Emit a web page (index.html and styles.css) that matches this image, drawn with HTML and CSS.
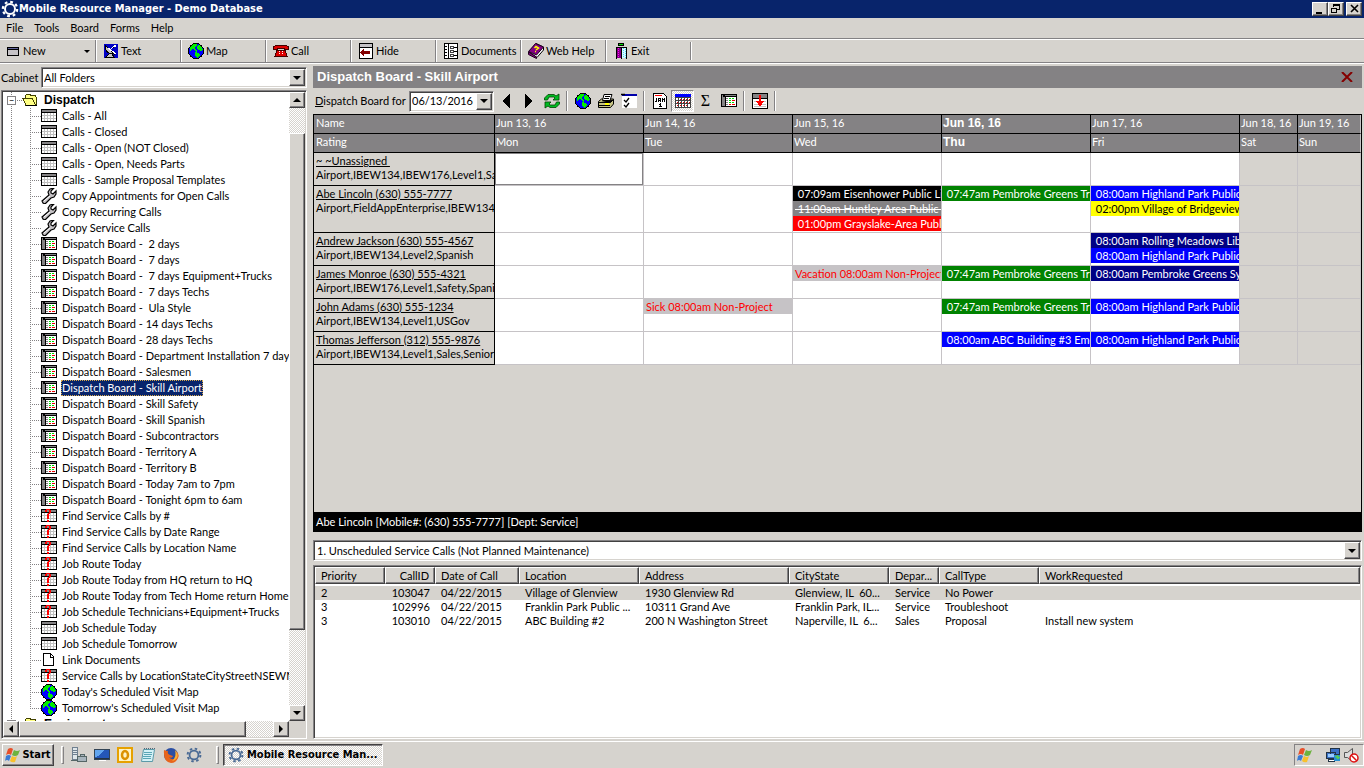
FILE: index.html
```html
<!DOCTYPE html>
<html lang="en">
<head>
<meta charset="utf-8">
<title>Mobile Resource Manager - Demo Database</title>
<link rel="stylesheet" href="styles.css">
</head>
<body>
<svg class="defs" aria-hidden="true">
  <symbol id="i-cal" viewBox="0 0 16 16"><path fill="#000" d="M0 1h16v13H0z"/><path fill="#848284" d="M1 2h14v2H1z"/><path fill="#c0c0c0" d="M1 5h14v8H1z"/><path fill="#fff" d="M1 5h2v2H1zM4 5h2v2H4zM7 5h2v2H7zM10 5h2v2h-2zM13 5h2v2h-2zM1 8h2v2H1zM4 8h2v2H4zM7 8h2v2H7zM10 8h2v2h-2zM13 8h2v2h-2zM1 11h2v2H1zM4 11h2v2H4zM7 11h2v2H7zM10 11h2v2h-2zM13 11h2v2h-2z"/></symbol>
  <symbol id="i-find" viewBox="0 0 16 16"><path fill="#000" d="M0 1h16v13H0z"/><path fill="#848284" d="M1 2h14v2H1z"/><path fill="#c0c0c0" d="M1 5h14v8H1z"/><path fill="#fff" d="M1 5h2v2H1zM4 5h2v2H4zM7 5h2v2H7zM10 5h2v2h-2zM13 5h2v2h-2zM1 8h2v2H1zM4 8h2v2H4zM7 8h2v2H7zM10 8h2v2h-2zM13 8h2v2h-2zM1 11h2v2H1zM4 11h2v2H4zM7 11h2v2H7zM10 11h2v2h-2zM13 11h2v2h-2z"/><path fill="#f00" d="M5 1h4v1H5zM4 2h2v2H4zM8 2h2v3H8zM7 5h2v1H7zM6 6h2v5H6zM6 12h2v2H6z"/></symbol>
  <symbol id="i-board" viewBox="0 0 16 16"><path fill="#000" d="M0 1h16v13H0z"/><path fill="#848284" d="M1 2h1v11H1zM2 4h2v9H2zM4 2h11v1H4z"/><path fill="#fff" d="M5 4h10v9H5z"/><path fill="#848284" d="M5 5h2v1H5zM5 7h2v1H5zM5 9h2v1H5zM5 11h2v1H5z"/><path fill="#0d0" d="M8 5h2v1H8zM11 5h2v1h-2zM8 7h2v1H8zM8 9h2v1H8zM11 9h2v1h-2z"/><path fill="#e00" d="M11 7h3v1h-3zM8 11h2v1H8zM11 11h3v1h-3z"/></symbol>
  <symbol id="i-wrench" viewBox="0 0 16 16"><path fill="#c6c3c6" stroke="#000" stroke-width="1.200" d="M1 13 8 7 7 4l2-3 4-1-3 3v2l2 1 3-3v3l-2 3-3 1-6 6-2-1z"/><path stroke="#fff" d="m3 13 6-5"/></symbol>
  <symbol id="i-doc" viewBox="0 0 16 16"><path fill="#fff" stroke="#000" d="M2.500 1.500h7l3 3v9h-10z"/><path fill="none" stroke="#000" d="M9.500 2v3h3"/></symbol>
  <symbol id="i-globe" viewBox="0 0 16 16"><circle cx="8" cy="8" r="7.500" fill="#00f" stroke="#000"/><path fill="#0e0" d="M2 4 5 1h4v2L7 4v2l2 1v2L7 8 5 6 2 8zM10 2l3 1 2 4-2 1-3-1-1-2zM7 9l4 1 1 2-3 3-2-2z"/></symbol>
  <symbol id="i-folder" viewBox="0 0 16 14"><path fill="#ffff84" stroke="#424100" d="M1 5.500h9l4 7H4zM3 5V2.500l2-1h3l1 1h4l1.500 2v8"/><path stroke="#000" d="M4 12.500h11"/></symbol>
  <symbol id="i-gear" viewBox="0 0 18 18"><circle cx="9" cy="9" r="5" fill="none" stroke="currentColor" stroke-width="2"/><circle cx="9" cy="9" r="7.200" fill="none" stroke="currentColor" stroke-width="2.200" stroke-dasharray="2.800 2.850"/></symbol>
  <symbol id="i-window" viewBox="0 0 16 16"><path fill="#000" d="M3 4h12v9H3z"/><path fill="#63659c" d="M4 5h10v1H4z"/><path fill="#c6c3c6" d="M4 7h10v5H4z"/></symbol>
  <symbol id="i-dish" viewBox="0 0 16 16"><path fill="#0000c6" d="M1 1h14v14H1z"/><path fill="#c6c3c6" stroke="#000" d="M2 2c0 6 3 9 9 9L6 6zM6 11l-3 3h8l-2-3"/><path stroke="#fff" stroke-width="1.300" d="m5 5 8 6M7 7l4-4h2"/><path fill="#fff" d="M11 2h2v2h-2z"/></symbol>
  <symbol id="i-phone" viewBox="0 0 16 16"><path fill="#d00" stroke="#400" d="M.5 6.500V4L3 2.500h10L15.500 4v2.500h-4V5h-7v1.500zM4 7h8l2 6.500H2z"/><path fill="#fff" d="M6 8h1v1H6zM9 8h1v1H9zM6 10h1v1H6zM9 10h1v1H9z"/></symbol>
  <symbol id="i-hide" viewBox="0 0 16 16"><path fill="#fff" stroke="#000" d="M1.500.5h13v15h-13z"/><path fill="#c6c3c6" d="M2 1h12v3H2z"/><path stroke="#000" d="M2 4.500h12"/><path fill="#840000" d="m2 9 4-4v3h6v3H6v3z"/></symbol>
  <symbol id="i-docs" viewBox="0 0 16 16"><path fill="#fff" stroke="#000" d="M1.500.5h13v15h-13zM5.500 1v14M1 3.500h3M1 6.500h3M1 9.500h3M1 12.500h3"/><path fill="#fff" stroke="#424142" d="M7.500 3.500h3v2h-3zM7.500 7.500h3v2h-3zM7.500 11.500h3v2h-3z"/><path stroke="#000" d="M11 4.500h3M11 8.500h3M11 12.500h3"/></symbol>
  <symbol id="i-book" viewBox="0 0 16 16"><path fill="#fff" stroke="#000" d="m1 9 8 5.500L15.500 7V4L8 .5z"/><path fill="#840084" stroke="#210021" d="m.5 8.500 7-8 8 3.500-7 8z"/><path fill="#840084" stroke="#210021" d="M.5 9v2.500l8 4V14z"/><path fill="none" stroke="#ff0" stroke-width="1.500" d="M6.500 5 8 3.500 10.500 5 8 7M7 8.500h1"/></symbol>
  <symbol id="i-exit" viewBox="0 0 16 16"><path fill="#000" d="M5 0h6v3H5zM3 4h11v12h-1V5H4v11H3z"/><path fill="#0d0" d="M6 1h4v1H6z"/><path fill="#840084" d="M4 5h4v10H4z"/><path fill="#000" d="M8 5h1v11H8z"/><path fill="#d6ffff" d="M9 5h4v10H9z"/><path stroke="#f0f" stroke-dasharray="1 1" d="M5.500 5v10"/><path stroke="#5cf" stroke-dasharray="1 1" d="M10.500 5v10M12.500 6v9"/></symbol>
  <symbol id="i-refresh" viewBox="0 0 16 16"><path fill="#0b2" stroke="#040" stroke-width=".8" d="M.5 7V5L4 1.500h6L12 3l3-2v6H9l2-2-1-1H5L3.500 7zM15.500 9v2L12 14.500H6L4 13l-3 2V9h6l-2 2 1 1h5l1.500-3z"/></symbol>
  <symbol id="i-print" viewBox="0 0 16 16"><path fill="#c6c384" stroke="#000" d="M.5 8.500 3.500 6h12v5l-3 3.500H.5z"/><path fill="#fff" stroke="#000" d="M4.500 7.500 6 1.500h8l-2 6z"/><path stroke="#000" d="M.5 9.500h12l3-3M1 12.500h11M7 3.500h5M6 5.500h5"/><path fill="#ff0" d="M7 10h4v2H7z"/></symbol>
  <symbol id="i-check" viewBox="0 0 16 16"><path fill="#fff" d="M1 1h15v14H1z"/><path fill="#00a" d="M1 1h15v2H1z"/><path fill="none" stroke="#000" stroke-width="1.300" d="M0 1.500h4M3 7l2 2 3-4M3 12l2 2 3-4"/></symbol>
  <symbol id="i-day" viewBox="0 0 16 16"><path fill="#fff" stroke="#000" d="M1.500.5h10l3 3v12h-13z"/><path stroke="#f00" d="M3 2.500h7"/><path fill="#000" d="M4 5h1v4H4zM3 8h1v1H3zM6 5h3v1H6zM6 6h1v3H6zM8 6h1v3H8zM6 7h3v1H6zM10 5h1v4h-1zM11 6h1v1h-1zM12 5h1v4h-1zM7 11h1v1H7zM8 10h1v4H8zM7 13h3v1H7z"/></symbol>
  <symbol id="i-month" viewBox="0 0 16 16"><path fill="#424142" d="M0 1h16v14H0z"/><path fill="#00f" d="M0 1h16v3H0z"/><path fill="#fff" d="M1 5h2v2H1zM4 5h2v2H4zM7 5h2v2H7zM10 5h2v2h-2zM13 5h2v2h-2zM1 8h2v2H1zM4 8h2v2H4zM7 8h2v2H7zM10 8h2v2h-2zM13 8h2v2h-2zM1 11h2v3H1zM4 11h2v3H4zM7 11h2v3H7zM10 11h2v3h-2zM13 11h2v3h-2z"/><path fill="#e00" d="M5 6h1v1H5zM8 6h1v1H8zM11 6h1v1h-1zM14 6h1v1h-1zM2 9h1v1H2zM5 9h1v1H5zM8 9h1v1H8zM11 9h1v1h-1zM14 9h1v1h-1zM2 12h1v1H2zM5 12h1v1H5zM8 12h1v1H8zM11 12h1v1h-1z"/></symbol>
  <symbol id="i-down" viewBox="0 0 16 16"><path fill="#fff" stroke="#000" d="M.5.500h15v15H.5z"/><path fill="#848284" d="M1 1h14v4H1z"/><path stroke="#000" d="M1 5.500h14"/><path stroke="#c6c3c6" d="M2 8.500h12M2 11.500h12M2 13.500h12"/><path fill="#f00" d="M7 2h2v6h3l-4 6-4-6h3z"/></symbol>
  <symbol id="i-flag" viewBox="0 0 16 16"><path fill="#e8502a" d="M3 2q3-2 5 0L6 8Q4 6 1 8z"/><path fill="#6cb33f" d="M9 3q3 2 6 0l-2 5q-3 2-6 0z"/><path fill="#3a7bd5" d="M1 9q3-2 5 0l-2 5q-2-2-4 0z"/><path fill="#f8c12c" d="M7 9q3 2 5 0l-2 6q-3 1-5-1z"/></symbol>
  <symbol id="i-server" viewBox="0 0 16 16"><path fill="#dfe6ea" stroke="#708090" d="M1.500.5h5v12h-5z"/><path stroke="#708090" d="M2 3.500h4M2 5.500h4M2 7.500h4"/><path fill="#a7b4bd" stroke="#566" d="M6.500 9.500h9v5h-9zM9 9V7.500h4V9M0 13.500h6"/></symbol>
  <symbol id="i-desk" viewBox="0 0 16 16"><path fill="#2457b8" stroke="#345" d="M.5 2.500h15v10H.5z"/><path fill="#62a5ee" d="m1 3h9L4 9 1 10z"/><path fill="#fff" d="M5 13h7v1H5z"/><path fill="#234" d="M1 11h14v1H1z"/></symbol>
  <symbol id="i-outlook" viewBox="0 0 16 16"><path fill="#fff3c4" stroke="#e6a100" stroke-width="2" d="M1 1h14v14H1z"/><ellipse cx="8" cy="8" rx="3" ry="4" fill="none" stroke="#dc9200" stroke-width="2.500"/></symbol>
  <symbol id="i-note" viewBox="0 0 16 16"><path fill="#d3f1f6" stroke="#5b9aa8" d="M3.500 2.500h11l-2 12h-11z"/><path stroke="#5aa6b5" d="M4 5.500h8M4 7.500h8M3 9.500h8M3 11.500h8"/><path stroke="#567" stroke-dasharray="1 1" d="M4 1.500h11"/></symbol>
  <symbol id="i-fox" viewBox="0 0 16 16"><circle cx="8" cy="8" r="7" fill="#2c4fa3"/><path fill="#e8641b" d="M1 3q2 1 4 1-1 3 2 4l3 1q-1 3-4 1 3 4 7 1 2-3 0-7 4 3 2 7-2 5-7 5Q0 15 1 3z"/><path fill="#fbb034" d="M12 3q4 4 2 8-2 3-5 3 5-4 3-11z"/></symbol>
  <symbol id="i-net" viewBox="0 0 16 16"><path fill="#3a6fc5" stroke="#234" d="M5.500 1.500h9v6h-9zM1.500 5.500h9v6h-9z"/><path fill="#9cf" d="M3 7h6v3H3z"/><path fill="#fff" stroke="#234" d="M3.500 12.500h6v2h-6z"/><circle cx="12" cy="11" r="3.500" fill="#2b8fd0"/><path fill="#5c5" d="m10 9 3-1 2 3-3 1z"/></symbol>
  <symbol id="i-mute" viewBox="0 0 16 16"><path fill="#ddd" stroke="#555" d="M1.500 5.500h3l5-4v13l-5-4h-3z"/><circle cx="11" cy="11" r="4" fill="#fff" stroke="#d11" stroke-width="1.500"/><path stroke="#d11" stroke-width="1.500" d="m8 8 6 6"/></symbol>
</svg>

<header class="titlebar">
  <svg class="title-icon smooth"><use href="#i-gear"/></svg>
  <h1>Mobile Resource Manager - Demo Database</h1>
  <div class="win-buttons">
    <button class="bevel" aria-label="Minimize"><svg viewBox="0 0 12 10"><path d="M2 8h6v2H2z"/></svg></button>
    <button class="bevel" aria-label="Restore"><svg viewBox="0 0 12 10"><path fill="none" stroke="#000" d="M3.500 3V.5h6v5H7M1.500 4.500h5v4h-5z"/><path d="M3 0h7v2H3zM1 4h6v1H1z"/></svg></button>
    <button class="bevel close" aria-label="Close"><svg class="smooth" viewBox="0 0 12 10"><path stroke="#000" stroke-width="1.600" d="m3 1 7 7M10 1 3 8"/></svg></button>
  </div>
</header>

<nav class="menubar">
  <button>File</button><button>Tools</button><button>Board</button><button>Forms</button><button>Help</button>
</nav>

<div class="toolbar">
  <button class="tool new"><svg><use href="#i-window"/></svg>New<i class="caret"></i></button>
  <button class="tool"><svg><use href="#i-dish"/></svg>Text</button>
  <button class="tool"><svg><use href="#i-globe"/></svg>Map</button>
  <button class="tool"><svg><use href="#i-phone"/></svg>Call</button>
  <button class="tool"><svg><use href="#i-hide"/></svg>Hide</button>
  <button class="tool"><svg><use href="#i-docs"/></svg>Documents</button>
  <button class="tool"><svg class="smooth"><use href="#i-book"/></svg>Web Help</button>
  <button class="tool last"><svg><use href="#i-exit"/></svg>Exit</button>
</div>

<main class="main">
  <aside class="side">
    <div class="cabinet">
      <label for="cabinet">Cabinet</label>
      <div class="combo sunken"><select id="cabinet"><option>All Folders</option></select><span class="drop bevel"><i class="caret"></i></span></div>
    </div>
    <div class="tree sunken">
      <ul class="items">
        <li class="root"><span class="box">−</span><svg><use href="#i-folder"/></svg><b>Dispatch</b></li>
        <li><svg><use href="#i-cal"/></svg><span>Calls - All</span></li>
        <li><svg><use href="#i-cal"/></svg><span>Calls - Closed</span></li>
        <li><svg><use href="#i-cal"/></svg><span>Calls - Open (NOT Closed)</span></li>
        <li><svg><use href="#i-cal"/></svg><span>Calls - Open, Needs Parts</span></li>
        <li><svg><use href="#i-cal"/></svg><span>Calls - Sample Proposal Templates</span></li>
        <li><svg class="smooth"><use href="#i-wrench"/></svg><span>Copy Appointments for Open Calls</span></li>
        <li><svg class="smooth"><use href="#i-wrench"/></svg><span>Copy Recurring Calls</span></li>
        <li><svg class="smooth"><use href="#i-wrench"/></svg><span>Copy Service Calls</span></li>
        <li><svg><use href="#i-board"/></svg><span>Dispatch Board -  2 days</span></li>
        <li><svg><use href="#i-board"/></svg><span>Dispatch Board -  7 days</span></li>
        <li><svg><use href="#i-board"/></svg><span>Dispatch Board -  7 days Equipment+Trucks</span></li>
        <li><svg><use href="#i-board"/></svg><span>Dispatch Board -  7 days Techs</span></li>
        <li><svg><use href="#i-board"/></svg><span>Dispatch Board -  Ula Style</span></li>
        <li><svg><use href="#i-board"/></svg><span>Dispatch Board - 14 days Techs</span></li>
        <li><svg><use href="#i-board"/></svg><span>Dispatch Board - 28 days Techs</span></li>
        <li><svg><use href="#i-board"/></svg><span>Dispatch Board - Department Installation 7 days</span></li>
        <li><svg><use href="#i-board"/></svg><span>Dispatch Board - Salesmen</span></li>
        <li><svg><use href="#i-board"/></svg><span class="selected">Dispatch Board - Skill Airport</span></li>
        <li><svg><use href="#i-board"/></svg><span>Dispatch Board - Skill Safety</span></li>
        <li><svg><use href="#i-board"/></svg><span>Dispatch Board - Skill Spanish</span></li>
        <li><svg><use href="#i-board"/></svg><span>Dispatch Board - Subcontractors</span></li>
        <li><svg><use href="#i-board"/></svg><span>Dispatch Board - Territory A</span></li>
        <li><svg><use href="#i-board"/></svg><span>Dispatch Board - Territory B</span></li>
        <li><svg><use href="#i-board"/></svg><span>Dispatch Board - Today 7am to 7pm</span></li>
        <li><svg><use href="#i-board"/></svg><span>Dispatch Board - Tonight 6pm to 6am</span></li>
        <li><svg><use href="#i-find"/></svg><span>Find Service Calls by #</span></li>
        <li><svg><use href="#i-find"/></svg><span>Find Service Calls by Date Range</span></li>
        <li><svg><use href="#i-find"/></svg><span>Find Service Calls by Location Name</span></li>
        <li><svg><use href="#i-find"/></svg><span>Job Route Today</span></li>
        <li><svg><use href="#i-find"/></svg><span>Job Route Today from HQ return to HQ</span></li>
        <li><svg><use href="#i-find"/></svg><span>Job Route Today from Tech Home return Home</span></li>
        <li><svg><use href="#i-find"/></svg><span>Job Schedule Technicians+Equipment+Trucks</span></li>
        <li><svg><use href="#i-cal"/></svg><span>Job Schedule Today</span></li>
        <li><svg><use href="#i-cal"/></svg><span>Job Schedule Tomorrow</span></li>
        <li><svg><use href="#i-doc"/></svg><span>Link Documents</span></li>
        <li><svg><use href="#i-find"/></svg><span>Service Calls by LocationStateCityStreetNSEWM</span></li>
        <li><svg><use href="#i-globe"/></svg><span>Today's Scheduled Visit Map</span></li>
        <li class="end"><svg><use href="#i-globe"/></svg><span>Tomorrow's Scheduled Visit Map</span></li>
        <li class="root"><span class="box">+</span><svg><use href="#i-folder"/></svg><b>Equipment</b></li>
      </ul>
      <div class="vscroll">
        <button class="bevel" aria-label="Scroll up"><i class="caret up"></i></button>
        <div class="vthumb bevel"></div>
        <button class="bevel" aria-label="Scroll down"><i class="caret"></i></button>
      </div>
      <div class="hscroll">
        <button class="bevel" aria-label="Scroll left"><i class="caret left"></i></button>
        <div class="hthumb bevel"></div>
        <button class="bevel" aria-label="Scroll right"><i class="caret right"></i></button>
      </div>
    </div>
  </aside>

  <section class="panel">
    <div class="panel-head">
      <h2>Dispatch Board - Skill Airport</h2>
      <button aria-label="Close board"><svg class="smooth" viewBox="0 0 12 10"><path stroke="#840000" stroke-width="2" d="m1 0 10 10M11 0 1 10"/></svg></button>
    </div>
    <div class="board-tools">
      <label for="date"><u>D</u>ispatch Board for</label>
      <div class="combo date sunken"><input id="date" value="06/13/2016"><button class="drop bevel" aria-label="Pick date"><i class="caret"></i></button></div>
      <button class="ib" aria-label="Previous"><svg viewBox="0 0 16 16"><path d="M12 1v14L4 8z"/></svg></button>
      <button class="ib" aria-label="Next"><svg viewBox="0 0 16 16"><path d="M4 1v14l8-7z"/></svg></button>
      <button class="ib" aria-label="Refresh"><svg class="smooth"><use href="#i-refresh"/></svg></button>
      <i class="sep"></i>
      <button class="ib" aria-label="Map"><svg><use href="#i-globe"/></svg></button>
      <button class="ib" aria-label="Print"><svg class="smooth"><use href="#i-print"/></svg></button>
      <button class="ib" aria-label="Options"><svg class="smooth"><use href="#i-check"/></svg></button>
      <i class="sep"></i>
      <button class="ib" aria-label="Day"><svg><use href="#i-day"/></svg></button>
      <button class="ib pressed" aria-label="Week"><svg><use href="#i-month"/></svg></button>
      <button class="ib sigma">Σ</button>
      <button class="ib" aria-label="Grid"><svg><use href="#i-board"/></svg></button>
      <i class="sep"></i>
      <button class="ib" aria-label="Show calls"><svg><use href="#i-down"/></svg></button>
      <i class="sep"></i>
    </div>

    <div class="board">
      <table class="grid">
        <colgroup><col class="c-name"><col><col><col><col><col><col class="c-sat"><col class="c-sun"></colgroup>
        <thead>
          <tr><th>Name</th><th>Jun 13, 16</th><th>Jun 14, 16</th><th>Jun 15, 16</th><th class="today">Jun 16, 16</th><th>Jun 17, 16</th><th>Jun 18, 16</th><th>Jun 19, 16</th></tr>
          <tr><th>Rating</th><th>Mon</th><th>Tue</th><th>Wed</th><th class="today">Thu</th><th>Fri</th><th>Sat</th><th>Sun</th></tr>
        </thead>
        <tbody>
          <tr><th><a href="#">~ ~Unassigned&nbsp;</a><p>Airport,IBEW134,IBEW176,Level1,Sa</p></th><td class="focus"></td><td></td><td></td><td></td><td></td><td class="off"></td><td class="off"></td></tr>
          <tr class="tall"><th><a href="#">Abe Lincoln (630) 555-7777</a><p>Airport,FieldAppEnterprise,IBEW134,L</p></th><td></td><td></td>
            <td><div class="ev black">&nbsp;07:09am Eisenhower Public Li</div><div class="ev gray">&nbsp;11:00am Huntley Area Public L</div><div class="ev red">&nbsp;01:00pm Grayslake-Area Publi</div></td>
            <td><div class="ev green">&nbsp;07:47am Pembroke Greens Tr</div></td>
            <td><div class="ev blue">&nbsp;08:00am Highland Park Public</div><div class="ev yellow">&nbsp;02:00pm Village of Bridgeview</div></td><td class="off"></td><td class="off"></td></tr>
          <tr><th><a href="#">Andrew Jackson (630) 555-4567</a><p>Airport,IBEW134,Level2,Spanish</p></th><td></td><td></td><td></td><td></td>
            <td><div class="ev navy">&nbsp;08:00am Rolling Meadows Lib</div><div class="ev blue">&nbsp;08:00am Highland Park Public</div></td><td class="off"></td><td class="off"></td></tr>
          <tr><th><a href="#">James Monroe (630) 555-4321</a><p>Airport,IBEW176,Level1,Safety,Spanis</p></th><td></td><td></td>
            <td><div class="ev away">Vacation 08:00am Non-Project</div></td><td><div class="ev green">&nbsp;07:47am Pembroke Greens Tr</div></td>
            <td><div class="ev navy">&nbsp;08:00am Pembroke Greens Sy</div></td><td class="off"></td><td class="off"></td></tr>
          <tr><th><a href="#">John Adams (630) 555-1234</a><p>Airport,IBEW134,Level1,USGov</p></th><td></td>
            <td><div class="ev away">Sick 08:00am Non-Project</div></td><td></td><td><div class="ev green">&nbsp;07:47am Pembroke Greens Tr</div></td>
            <td><div class="ev blue">&nbsp;08:00am Highland Park Public</div></td><td class="off"></td><td class="off"></td></tr>
          <tr><th><a href="#">Thomas Jefferson (312) 555-9876</a><p>Airport,IBEW134,Level1,Sales,Senior</p></th><td></td><td></td><td></td>
            <td><div class="ev blue">&nbsp;08:00am ABC Building #3 Eme</div></td><td><div class="ev blue">&nbsp;08:00am Highland Park Public</div></td><td class="off"></td><td class="off"></td></tr>
        </tbody>
      </table>
    </div>
    <div class="status">Abe Lincoln [Mobile#: (630) 555-7777] [Dept: Service]</div>

    <div class="combo list-filter sunken"><select aria-label="Call list"><option>1. Unscheduled Service Calls (Not Planned Maintenance)</option></select><span class="drop bevel"><i class="caret"></i></span></div>

    <div class="calls sunken">
      <table>
        <colgroup><col class="w70"><col class="w50"><col class="w84"><col class="w120"><col class="w150"><col class="w100"><col class="w50"><col class="w100"><col></colgroup>
        <thead><tr><th><span>Priority</span></th><th class="num"><span>CallID</span></th><th><span>Date of Call</span></th><th><span>Location</span></th><th><span>Address</span></th><th><span>CityState</span></th><th><span>Depar...</span></th><th><span>CallType</span></th><th><span>WorkRequested</span></th></tr></thead>
        <tbody>
          <tr class="current"><td>2</td><td class="num">103047</td><td>04/22/2015</td><td>Village of Glenview</td><td>1930 Glenview Rd</td><td>Glenview, IL  60...</td><td>Service</td><td>No Power</td><td></td></tr>
          <tr><td>3</td><td class="num">102996</td><td>04/22/2015</td><td>Franklin Park Public ...</td><td>10311 Grand Ave</td><td>Franklin Park, IL...</td><td>Service</td><td>Troubleshoot</td><td></td></tr>
          <tr><td>3</td><td class="num">103010</td><td>04/22/2015</td><td>ABC Building #2</td><td>200 N Washington Street</td><td>Naperville, IL  6...</td><td>Sales</td><td>Proposal</td><td>Install new system</td></tr>
        </tbody>
      </table>
    </div>
  </section>
</main>

<footer class="taskbar">
  <button class="start bevel"><svg class="smooth"><use href="#i-flag"/></svg>Start</button>
  <i class="grip"></i>
  <div class="quick">
    <button aria-label="Server Manager"><svg><use href="#i-server"/></svg></button>
    <button aria-label="Show desktop"><svg><use href="#i-desk"/></svg></button>
    <button aria-label="Outlook"><svg class="smooth"><use href="#i-outlook"/></svg></button>
    <button aria-label="Notepad"><svg class="smooth"><use href="#i-note"/></svg></button>
    <button aria-label="Firefox"><svg class="smooth"><use href="#i-fox"/></svg></button>
    <button aria-label="Mobile Resource Manager"><svg class="steel smooth"><use href="#i-gear"/></svg></button>
  </div>
  <i class="grip"></i>
  <button class="task"><svg class="steel smooth"><use href="#i-gear"/></svg>Mobile Resource Man...</button>
  <div class="tray"><svg class="flag smooth"><use href="#i-flag"/></svg><svg><use href="#i-net"/></svg><svg class="smooth"><use href="#i-mute"/></svg></div>
</footer>
</body>
</html>
```
FILE: styles.css
```css
* { box-sizing: border-box; }
body {
  margin: 0;
  min-height: 100vh;
  display: flex;
  flex-direction: column;
  background: #d6d3ce;
  color: #000;
  font: 11px/14px Lato, "Liberation Sans", Arial, sans-serif;
}
button, input, select {
  font: inherit;
  color: inherit;
  background: none;
  border: 0;
  padding: 0;
  margin: 0;
  border-radius: 0;
  appearance: none;
}
button { display: flex; align-items: center; justify-content: center; }
svg { width: 16px; height: 16px; flex: none; display: block; shape-rendering: crispEdges; }
svg.smooth { shape-rendering: auto; }
h1, h2, p, ul { margin: 0; padding: 0; }
.defs { position: absolute; width: 0; height: 0; }

.bevel {
  background: #d6d3ce;
  border: 1px solid;
  border-color: #fff #424142 #424142 #fff;
  box-shadow: inset -1px -1px #848284;
}
.sunken {
  border: 1px solid;
  border-color: #848284 #fff #fff #848284;
  box-shadow: inset 1px 1px #424142, inset -1px -1px #d6d3ce;
  padding: 1px;
}
.caret {
  width: 0;
  height: 0;
  border: 4px solid transparent;
  border-bottom-width: 0;
  border-top-color: #000;
}
.caret.up { border: 4px solid transparent; border-top-width: 0; border-bottom-color: #000; }
.caret.left { border: 4px solid transparent; border-left-width: 0; border-right-color: #000; }
.caret.right { border: 4px solid transparent; border-right-width: 0; border-left-color: #000; }

.titlebar {
  height: 18px;
  display: flex;
  align-items: center;
  background: #08246b;
  color: #fff;
  padding: 0 2px 0 1px;
}
.titlebar h1, .start, .task { font: bold 11px/18px "DejaVu Sans Condensed", "DejaVu Sans", sans-serif; }
.titlebar h1 { flex: 1; }
.title-icon { width: 18px; height: 18px; }
.win-buttons { display: flex; }
.win-buttons button { width: 16px; height: 14px; }
.win-buttons svg { width: 12px; height: 10px; }
.win-buttons .close { margin-left: 2px; }

.menubar { display: flex; gap: 11px; height: 20px; padding: 0 6px 1px; }

.toolbar {
  display: flex;
  height: 26px;
  border-top: 1px solid #848284;
  border-bottom: 1px solid #fff;
  box-shadow: inset 0 1px #fff, inset 0 -1px #848284;
  padding: 1px 0;
}
.tool {
  width: 85px;
  gap: 2px;
  justify-content: flex-start;
  padding-left: 6px;
  border-right: 1px solid #fff;
  box-shadow: inset -1px 0 #848284;
}
.tool.new { width: 97px; padding-left: 4px; gap: 3px; }
.tool.new .caret { margin-left: auto; margin-right: 6px; border-width: 3px 3px 0; }
.tool.last { margin: 2px 0; }

.main { flex: 1; display: flex; gap: 6px; padding: 2px 2px 1px 1px; min-height: 0; }
.side { width: 306px; flex: none; display: flex; flex-direction: column; gap: 2px; padding-top: 1px; }
.cabinet { display: flex; align-items: center; justify-content: space-between; }
.combo { display: flex; height: 21px; background: #fff; }
.cabinet .combo { width: 266px; }
.combo select { flex: 1; min-width: 0; padding-left: 2px; }
.cabinet select { padding-left: 1px; }
.combo input { flex: 1; min-width: 0; padding-left: 1px; }
.drop { width: 16px; display: flex; align-items: center; justify-content: center; pointer-events: none; }

.tree {
  flex: 1;
  display: grid;
  grid-template-columns: 1fr 16px;
  grid-template-rows: 1fr 16px;
  background: #fff;
}
.items { list-style: none; overflow: hidden; min-width: 0; height: 0; min-height: 100%; }
.items li {
  display: flex;
  align-items: center;
  height: 16px;
  padding-left: 38px;
  gap: 4px;
  white-space: pre;
  background:
    repeating-linear-gradient(#848284 0 1px, transparent 1px 2px) 8px 0 / 1px 16px no-repeat,
    repeating-linear-gradient(#848284 0 1px, transparent 1px 2px) 27px 0 / 1px 16px no-repeat,
    repeating-linear-gradient(90deg, #848284 0 1px, transparent 1px 2px) 27px 8px / 11px 1px no-repeat;
}
.items li.end { background-size: 1px 16px, 1px 9px, 11px 1px; }
.items li.root {
  padding-left: 4px;
  gap: 6px;
  background:
    repeating-linear-gradient(#848284 0 1px, transparent 1px 2px) 8px 0 / 1px 16px no-repeat,
    repeating-linear-gradient(90deg, #848284 0 1px, transparent 1px 2px) 8px 8px / 11px 1px no-repeat;
}
.items .root svg { height: 14px; }
.items b { font: bold 12px/14px "Liberation Sans", Arial, sans-serif; }
.items li > span:not(.box) { padding: 0 1px; line-height: 14px; border: 1px solid transparent; border-width: 1px 0; }
.items li > span.selected { background: #08246b; color: #fff; outline: 1px dotted #d6a84a; outline-offset: -1px; }
.box {
  width: 9px;
  height: 9px;
  border: 1px solid #848284;
  background: #fff;
  font-size: 9px;
  line-height: 7px;
  text-align: center;
}
.vscroll, .hscroll {
  display: flex;
  background: repeating-conic-gradient(#fff 0 25%, #d6d3ce 0 50%) 0 0 / 2px 2px;
  justify-content: space-between;
}
.vscroll { flex-direction: column; }
.vscroll button, .hscroll button { width: 16px; height: 16px; flex: none; }
.vthumb { flex: none; height: 79%; margin-bottom: 50px; }
.hthumb { width: 227px; margin-right: auto; }
.tree::after { content: ""; background: #d6d3ce; }

.panel { flex: 1; min-width: 0; display: flex; flex-direction: column; }
.panel-head {
  display: flex;
  align-items: center;
  justify-content: space-between;
  height: 22px;
  padding: 0 9px 0 4px;
  background: #848284;
  color: #fff;
}
.panel-head h2 { font: bold 13px/22px "Liberation Sans", Arial, sans-serif; }
.panel-head svg { width: 12px; height: 10px; }
.board-tools { display: flex; align-items: center; height: 26px; padding-left: 2px; }
.board-tools label { width: 94px; }
.combo.date { width: 85px; }
.ib { width: 23px; height: 22px; }
.ib.pressed {
  border: 1px solid;
  border-color: #848284 #fff #fff #848284;
  background: repeating-conic-gradient(#fff 0 25%, #d6d3ce 0 50%) 0 0 / 2px 2px;
}
.sigma { font: 16px/20px "Liberation Serif", serif; }
.sep { width: 8px; height: 20px; background: linear-gradient(90deg, #848284 0 1px, #fff 1px 2px) 3px 0 / 2px 20px no-repeat; }

.board { flex: 1; border: 1px solid #000; border-bottom: 0; }
table { width: 100%; table-layout: fixed; border-spacing: 0; }
th { text-align: left; font-weight: normal; }
th, td { padding: 0; white-space: pre; overflow: hidden; vertical-align: top; }
.c-name { width: 181px; }
.c-sat { width: 58px; }
.c-sun { width: 63px; }
.grid thead th {
  height: 19px;
  padding: 1px 1px 0;
  background: #848284;
  color: #fff;
  border: 1px solid #000;
  border-width: 0 1px 1px 0;
}
.grid thead th:last-child { border-right-color: #c6c3c6; }
.grid thead th:first-child { padding-left: 2px; }
.grid thead .today { font: bold 12px/14px "Liberation Sans", Arial, sans-serif; }
.grid tbody th {
  height: 33px;
  padding: 1px 0 0 2px;
  border: 1px solid #000;
  border-width: 0 1px 1px 0;
}
.grid tbody .tall th { height: 47px; }
.grid a { color: inherit; text-decoration: underline; }
.grid td { background: #fff; border: 1px solid #c6c3c6; border-width: 0 1px 1px 0; }
.grid td.off { background: #d6d3ce; }
.grid td.focus { box-shadow: inset 0 0 0 1px #848284; }
.ev { height: 15px; line-height: 16px; padding-left: 2px; overflow: hidden; color: #fff; }
.black { background: #000; }
.gray { background: #848284; text-decoration: line-through; }
.red { background: #f00; }
.green { background: #008200; }
.blue { background: #00f; }
.navy { background: #000084; }
.yellow { background: #ff0; color: #000; }
.away { background: #c6c3c6; color: #f00; }
.status { height: 20px; line-height: 20px; padding-left: 3px; background: #000; color: #fff; margin-bottom: 8px; }

.list-filter { margin-bottom: 4px; }
.calls { height: 174px; background: #fff; }
.w50 { width: 50px; }
.w70 { width: 70px; }
.w84 { width: 84px; }
.w100 { width: 100px; }
.w120 { width: 120px; }
.w150 { width: 150px; }
.calls thead th { padding-bottom: 2px; }
.calls th span {
  display: block;
  height: 17px;
  line-height: 16px;
  padding: 0 5px;
  background: #d6d3ce;
  border: 1px solid;
  border-color: #fff #424142 #424142 #fff;
  box-shadow: inset -1px -1px #848284;
}
.calls td { height: 14px; padding: 0 5px 0 6px; }
.calls .num { text-align: right; }
.calls .current td { background: #d6d3ce; }

.taskbar {
  display: flex;
  align-items: center;
  height: 28px;
  padding: 2px 0 0 2px;
  box-shadow: inset 0 1px #d6d3ce, inset 0 2px #fff;
}
.start { width: 52px; height: 22px; gap: 1px; }
.grip { width: 3px; height: 18px; margin: 0 7px; border: 1px solid; border-color: #fff #848284 #848284 #fff; }
.quick { display: flex; width: 138px; gap: 7px; }
.steel { color: #4a6a94; }
.quick + .grip { margin-right: 4px; }
.task {
  width: 160px;
  height: 22px;
  gap: 3px;
  justify-content: flex-start;
  padding-left: 4px;
  border: 1px solid;
  border-color: #424142 #fff #fff #424142;
  box-shadow: inset 1px 1px #848284;
  background: repeating-conic-gradient(#fff 0 25%, #d6d3ce 0 50%) 0 0 / 2px 2px;
}
.tray {
  display: flex;
  align-items: center;
  gap: 2px;
  margin-left: auto;
  width: 70px;
  height: 22px;
  padding: 0 4px 0 2px;
  border: 1px solid;
  border-color: #848284 #fff #fff #848284;
}
.tray .flag { margin-right: auto; }
```
